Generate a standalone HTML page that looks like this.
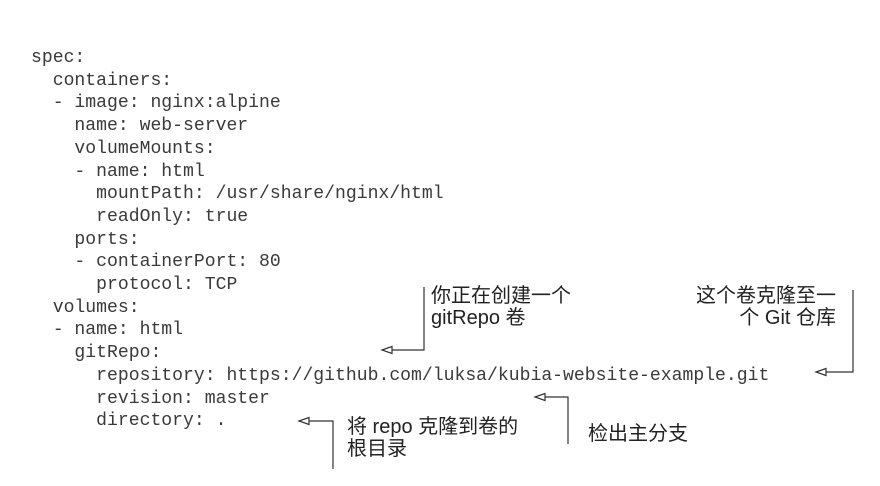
<!DOCTYPE html>
<html><head><meta charset="utf-8"><style>
body{margin:0;width:880px;height:486px;background:#fff;position:relative;overflow:hidden}
pre{position:absolute;left:31px;top:47px;margin:0;font:18.1px/22.7px "Liberation Mono",monospace;color:#3a3a3a}
.a{position:absolute;font:20px/22px "Liberation Sans","Noto Sans CJK SC",sans-serif;color:#222;white-space:nowrap}
svg{position:absolute;left:0;top:0}
</style></head><body>
<pre>spec:
  containers:
  - image: nginx:alpine
    name: web-server
    volumeMounts:
    - name: html
      mountPath: /usr/share/nginx/html
      readOnly: true
    ports:
    - containerPort: 80
      protocol: TCP
  volumes:
  - name: html
    gitRepo:
      repository: https://github.com/luksa/kubia-website-example.git
      revision: master
      directory: .</pre>
<div class="a" style="left:431px;top:285px">你正在创建一个<br>gitRepo 卷</div>
<div class="a" style="right:44px;top:285px;text-align:right">这个卷克隆至一<br>个 Git 仓库</div>
<div class="a" style="left:588px;top:423px">检出主分支</div>
<div class="a" style="left:347px;top:416px">将 repo 克隆到卷的<br>根目录</div>
<svg width="880" height="486" fill="#fff" stroke="#333" stroke-width="1.2">
<polyline fill="none" points="424,287 424,350 392,350"/><polygon points="382,350 392,346.5 392,353.5"/>
<polyline fill="none" points="853,290 853,372 826,372"/><polygon points="816,372 826,368.5 826,375.5"/>
<polyline fill="none" points="545,397 568,397 568,444"/><polygon points="535,397 545,393.5 545,400.5"/>
<polyline fill="none" points="309,421 333,421 333,469"/><polygon points="299,421 309,417.5 309,424.5"/>
</svg>
</body></html>
